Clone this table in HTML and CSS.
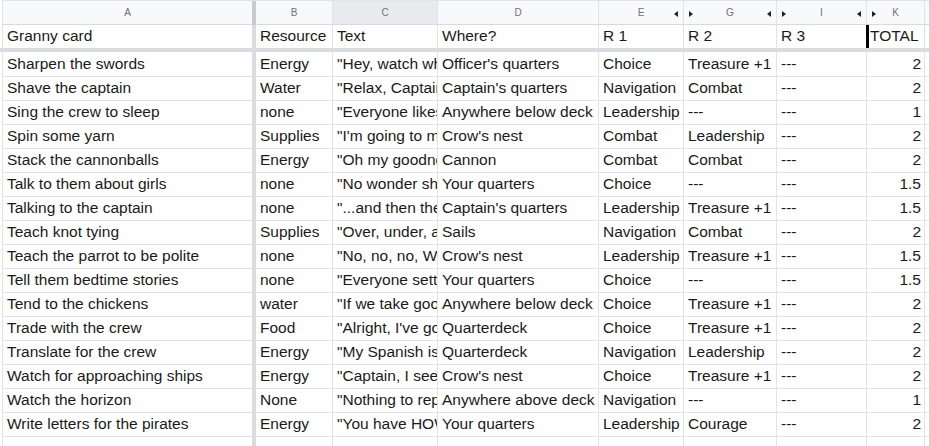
FILE: index.html
```html
<!DOCTYPE html>
<html>
<head>
<meta charset="utf-8">
<link rel="stylesheet" href="styles.css">
</head>
<body>
<div class="sheet">
  <div class="row hdr">
    <div class="c ca">A</div><div class="fz"></div>
    <div class="c cb">B</div>
    <div class="c cc sel">C</div>
    <div class="c cd">D</div>
    <div class="c ce">E<span class="ar al-r"></span></div>
    <div class="c cg"><span class="ar ar-l"></span>G<span class="ar al-r"></span></div>
    <div class="c ci"><span class="ar ar-l"></span>I<span class="ar al-r"></span></div>
    <div class="c ck"><span class="ar ar-l"></span>K</div>
    <div class="c cz"></div>
  </div>
  <div class="row r1">
    <div class="c ca">Granny card</div><div class="fz"></div>
    <div class="c cb">Resource</div>
    <div class="c cc">Text</div>
    <div class="c cd">Where?</div>
    <div class="c ce">R 1</div>
    <div class="c cg">R 2</div>
    <div class="c ci">R 3</div>
    <div class="c ck active">TOTAL</div>
    <div class="c cz"></div>
  </div>
  <div class="row fzrow">
    <div class="fzline"></div>
  </div>
  <div class="row d first">
    <div class="c ca">Sharpen the swords</div><div class="fz"></div>
    <div class="c cb">Energy</div>
    <div class="c cc">"Hey, watch where you're pointing that thing!"</div>
    <div class="c cd">Officer's quarters</div>
    <div class="c ce">Choice</div>
    <div class="c cg">Treasure +1</div>
    <div class="c ci">---</div>
    <div class="c ck num">2</div>
    <div class="c cz"></div>
  </div>
  <div class="row d">
    <div class="c ca">Shave the captain</div><div class="fz"></div>
    <div class="c cb">Water</div>
    <div class="c cc">"Relax, Captain, I've done this before."</div>
    <div class="c cd">Captain's quarters</div>
    <div class="c ce">Navigation</div>
    <div class="c cg">Combat</div>
    <div class="c ci">---</div>
    <div class="c ck num">2</div>
    <div class="c cz"></div>
  </div>
  <div class="row d">
    <div class="c ca">Sing the crew to sleep</div><div class="fz"></div>
    <div class="c cb">none</div>
    <div class="c cc">"Everyone likes a lullaby."</div>
    <div class="c cd">Anywhere below deck</div>
    <div class="c ce">Leadership</div>
    <div class="c cg">---</div>
    <div class="c ci">---</div>
    <div class="c ck num">1</div>
    <div class="c cz"></div>
  </div>
  <div class="row d">
    <div class="c ca">Spin some yarn</div><div class="fz"></div>
    <div class="c cb">Supplies</div>
    <div class="c cc">"I'm going to make a sweater."</div>
    <div class="c cd">Crow's nest</div>
    <div class="c ce">Combat</div>
    <div class="c cg">Leadership</div>
    <div class="c ci">---</div>
    <div class="c ck num">2</div>
    <div class="c cz"></div>
  </div>
  <div class="row d">
    <div class="c ca">Stack the cannonballs</div><div class="fz"></div>
    <div class="c cb">Energy</div>
    <div class="c cc">"Oh my goodness, these are heavy."</div>
    <div class="c cd">Cannon</div>
    <div class="c ce">Combat</div>
    <div class="c cg">Combat</div>
    <div class="c ci">---</div>
    <div class="c ck num">2</div>
    <div class="c cz"></div>
  </div>
  <div class="row d">
    <div class="c ca">Talk to them about girls</div><div class="fz"></div>
    <div class="c cb">none</div>
    <div class="c cc">"No wonder she left you."</div>
    <div class="c cd">Your quarters</div>
    <div class="c ce">Choice</div>
    <div class="c cg">---</div>
    <div class="c ci">---</div>
    <div class="c ck num">1.5</div>
    <div class="c cz"></div>
  </div>
  <div class="row d">
    <div class="c ca">Talking to the captain</div><div class="fz"></div>
    <div class="c cb">none</div>
    <div class="c cc">"...and then the whale said..."</div>
    <div class="c cd">Captain's quarters</div>
    <div class="c ce">Leadership</div>
    <div class="c cg">Treasure +1</div>
    <div class="c ci">---</div>
    <div class="c ck num">1.5</div>
    <div class="c cz"></div>
  </div>
  <div class="row d">
    <div class="c ca">Teach knot tying</div><div class="fz"></div>
    <div class="c cb">Supplies</div>
    <div class="c cc">"Over, under, around and through."</div>
    <div class="c cd">Sails</div>
    <div class="c ce">Navigation</div>
    <div class="c cg">Combat</div>
    <div class="c ci">---</div>
    <div class="c ck num">2</div>
    <div class="c cz"></div>
  </div>
  <div class="row d">
    <div class="c ca">Teach the parrot to be polite</div><div class="fz"></div>
    <div class="c cb">none</div>
    <div class="c cc">"No, no, no, We say please."</div>
    <div class="c cd">Crow's nest</div>
    <div class="c ce">Leadership</div>
    <div class="c cg">Treasure +1</div>
    <div class="c ci">---</div>
    <div class="c ck num">1.5</div>
    <div class="c cz"></div>
  </div>
  <div class="row d">
    <div class="c ca">Tell them bedtime stories</div><div class="fz"></div>
    <div class="c cb">none</div>
    <div class="c cc">"Everyone settle down now."</div>
    <div class="c cd">Your quarters</div>
    <div class="c ce">Choice</div>
    <div class="c cg">---</div>
    <div class="c ci">---</div>
    <div class="c ck num">1.5</div>
    <div class="c cz"></div>
  </div>
  <div class="row d">
    <div class="c ca">Tend to the chickens</div><div class="fz"></div>
    <div class="c cb">water</div>
    <div class="c cc">"If we take good care of them..."</div>
    <div class="c cd">Anywhere below deck</div>
    <div class="c ce">Choice</div>
    <div class="c cg">Treasure +1</div>
    <div class="c ci">---</div>
    <div class="c ck num">2</div>
    <div class="c cz"></div>
  </div>
  <div class="row d">
    <div class="c ca">Trade with the crew</div><div class="fz"></div>
    <div class="c cb">Food</div>
    <div class="c cc">"Alright, I've got something for you."</div>
    <div class="c cd">Quarterdeck</div>
    <div class="c ce">Choice</div>
    <div class="c cg">Treasure +1</div>
    <div class="c ci">---</div>
    <div class="c ck num">2</div>
    <div class="c cz"></div>
  </div>
  <div class="row d">
    <div class="c ca">Translate for the crew</div><div class="fz"></div>
    <div class="c cb">Energy</div>
    <div class="c cc">"My Spanish is a little rusty."</div>
    <div class="c cd">Quarterdeck</div>
    <div class="c ce">Navigation</div>
    <div class="c cg">Leadership</div>
    <div class="c ci">---</div>
    <div class="c ck num">2</div>
    <div class="c cz"></div>
  </div>
  <div class="row d">
    <div class="c ca">Watch for approaching ships</div><div class="fz"></div>
    <div class="c cb">Energy</div>
    <div class="c cc">"Captain, I see a ship!"</div>
    <div class="c cd">Crow's nest</div>
    <div class="c ce">Choice</div>
    <div class="c cg">Treasure +1</div>
    <div class="c ci">---</div>
    <div class="c ck num">2</div>
    <div class="c cz"></div>
  </div>
  <div class="row d">
    <div class="c ca">Watch the horizon</div><div class="fz"></div>
    <div class="c cb">None</div>
    <div class="c cc">"Nothing to report, Captain."</div>
    <div class="c cd">Anywhere above deck</div>
    <div class="c ce">Navigation</div>
    <div class="c cg">---</div>
    <div class="c ci">---</div>
    <div class="c ck num">1</div>
    <div class="c cz"></div>
  </div>
  <div class="row d">
    <div class="c ca">Write letters for the pirates</div><div class="fz"></div>
    <div class="c cb">Energy</div>
    <div class="c cc">"You have HOW many wives?"</div>
    <div class="c cd">Your quarters</div>
    <div class="c ce">Leadership</div>
    <div class="c cg">Courage</div>
    <div class="c ci">---</div>
    <div class="c ck num">2</div>
    <div class="c cz"></div>
  </div>
  <div class="row d">
    <div class="c ca"></div><div class="fz"></div>
    <div class="c cb"></div>
    <div class="c cc"></div>
    <div class="c cd"></div>
    <div class="c ce"></div>
    <div class="c cg"></div>
    <div class="c ci"></div>
    <div class="c ck"></div>
    <div class="c cz"></div>
  </div>
</div>
</body>
</html>
```
FILE: styles.css
```css
* { box-sizing: border-box; }
html, body { margin: 0; padding: 0; background: #fff; overflow: hidden; }
body { width: 929px; height: 446px; }
.sheet {
  font-family: "Liberation Sans", Arial, sans-serif;
  font-size: 15.5px;
  color: #1a1a1a;
  padding-left: 2px;
}
.row {
  display: grid;
  grid-template-columns: 250px 4px 77px 105px 161px 85px 93px 90px 58px 1fr;
  height: 24px;
}
.c {
  border-right: 1px solid #e2e3e3;
  border-bottom: 1px solid #e2e3e3;
  padding: 0 4px 1px;
  white-space: nowrap;
  overflow: hidden;
  display: flex;
  align-items: center;
  line-height: 1;
}
.ca { border-left: 1px solid #e2e3e3; border-right: none; }
.cz { border-right: none; }
.fz { background: #dadcdf; }
.num { justify-content: flex-end; padding-right: 3px; }

.hdr { height: 25px; background: #f8f9fa; border-top: 1px solid #e2e3e3; }
.hdr .c {
  justify-content: center;
  font-size: 10px;
  color: #6f7276;
  position: relative;
  border-bottom-color: #d7d9dc;
  padding-top: 1px;
}
.hdr .sel { background: #e8eaed; }
.hdr .fz { background: #c9cbce; }
.hdr .cz { background: #f8f9fa; }

.ar {
  position: absolute;
  top: 10px;
  width: 0;
  height: 0;
  border-top: 3px solid transparent;
  border-bottom: 3px solid transparent;
}
.al-r { right: 5px; border-right: 4px solid #202124; }
.ar-l { left: 5px; border-left: 4px solid #202124; }

.r1 { height: 23px; }
.r1 .c { border-bottom: none; }
.r1 .active { box-shadow: inset 3px 0 0 #000; margin-left: -1px; padding-left: 4px; }

.fzrow { display: block; height: 4px; }
.fzline { height: 4px; margin-left: -2px; background: #dadcdf; }

.first { height: 25px; }
```
